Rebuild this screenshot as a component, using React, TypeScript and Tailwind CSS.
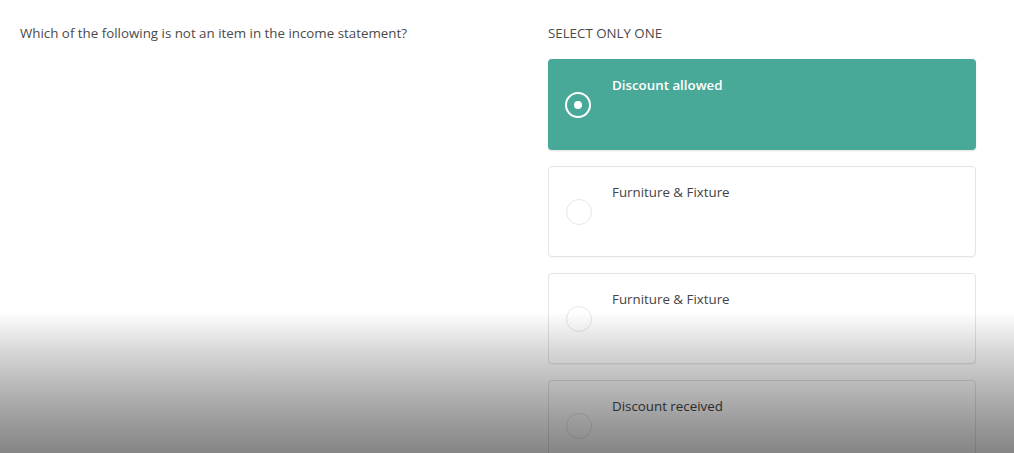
import React from "react";

const options = [
  { label: "Discount allowed", selected: true },
  { label: "Furniture & Fixture", selected: false },
  { label: "Furniture & Fixture", selected: false },
  { label: "Discount received", selected: false },
];

export default function App() {
  return (
    <div
      className="relative w-[1014px] h-[453px] overflow-hidden bg-white"
      style={{ fontFamily: '"Open Sans", sans-serif' }}
    >
      <div className="flex pt-[24px]">
        <div className="w-[548px] pl-[20px]">
          <p className="text-[13.33px] leading-[18px] text-[#4a4a4a]">
            Which of the following is not an item in the income statement?
          </p>
        </div>
        <div className="w-[428px]">
          <p className="text-[13.3px] leading-[18px] text-[#4a4a4a] uppercase">Select only one</p>
          <div className="mt-[17px] flex flex-col gap-[16px]">
            {options.map((o, i) => (
              <div
                key={i}
                className={
                  "flex h-[91px] rounded-[4px] " +
                  (o.selected
                    ? "bg-[#48a998] shadow-[0_1px_2px_rgba(0,0,0,0.12)]"
                    : "bg-white border border-[#e4e4e4] shadow-[0_1px_1px_rgba(0,0,0,0.04)]")
                }
              >
                <div className={"flex items-center justify-center " + (o.selected ? "w-[60px]" : "w-[59px]")}>
                  {o.selected ? (
                    <div className="w-[26px] h-[26px] rounded-full border-2 border-white flex items-center justify-center">
                      <div className="w-[8px] h-[8px] rounded-full bg-white" />
                    </div>
                  ) : (
                    <div className="w-[26px] h-[26px] rounded-full border border-[#e6e6e6] bg-white" />
                  )}
                </div>
                <div
                  className={
                    "pl-[4px] pt-[16px] text-[13.33px] leading-[20px] " +
                    (o.selected ? "font-semibold text-white" : "text-[#444] -mt-px")
                  }
                >
                  {o.label}
                </div>
              </div>
            ))}
          </div>
        </div>
      </div>
      <div
        className="absolute left-0 right-0 bottom-0 h-[141px] pointer-events-none"
        style={{
          background:
            "linear-gradient(to bottom, rgba(0,0,0,0) 0%, rgba(0,0,0,0.06) 10%, rgba(0,0,0,0.17) 30%, rgba(0,0,0,0.29) 55%, rgba(0,0,0,0.4) 80%, rgba(0,0,0,0.48) 100%)",
        }}
      />
    </div>
  );
}
